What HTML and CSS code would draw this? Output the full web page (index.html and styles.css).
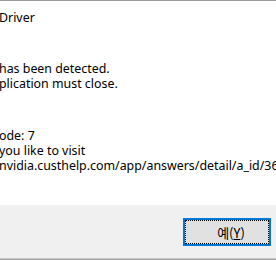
FILE: index.html
```html
<!DOCTYPE html>
<html lang="ko">
<head>
    <meta charset="UTF-8">
    <meta name="viewport" content="width=device-width, initial-scale=1.0">
    <title>NVIDIA OpenGL Driver</title>
    <link rel="stylesheet" href="styles.css">
</head>
<body>
    <div class="dialog">
        <!-- Caption -->
        <div class="caption">Driver</div>

        <!-- Message -->
        <div class="message">
            <p class="msg">has been detected.<br>plication must close.</p>
            <p class="msg second">ode: 7<br>you like to visit<br>nvidia.custhelp.com/app/answers/detail/a_id/3633</p>
        </div>

        <!-- Buttons -->
        <div class="footer">
            <button class="btn-yes">예(<u>Y</u>)</button>
        </div>
    </div>
</body>
</html>
```

FILE: styles.css
```css
* {
    margin: 0;
    padding: 0;
    box-sizing: border-box;
}

body {
    width: 276px;
    height: 260px;
    overflow: hidden;
    background-color: #fff;
    font-family: "Noto Sans", "Noto Sans CJK KR", sans-serif;
    font-size: 12.4px;
    line-height: 15px;
    color: #000;
}

.dialog {
    display: flex;
    flex-direction: column;
    height: 260px;
    border-top: 1px solid #9a9a9a;
}

.caption {
    margin-top: 9px;
    margin-left: -1px;
    height: 15px;
    white-space: nowrap;
}

.message {
    flex: 1;
    margin-left: -1px;
    white-space: nowrap;
    overflow: hidden;
}

.msg {
    margin-top: 36px;
}

.msg.second {
    margin-top: 37px;
}

.footer {
    display: flex;
    justify-content: flex-end;
    align-items: flex-start;
    height: 55px;
    padding: 13px 5px 0 0;
    background-color: #f0f0f0;
    border-bottom: 1px solid #a0a0a0;
    box-shadow: inset 0 -1px 0 #c8c8c8;
}

.btn-yes {
    width: 88px;
    height: 28px;
    background-color: #e1e1e1;
    border: 2px solid #0078d7;
    outline: 1px dotted #000;
    outline-offset: -3px;
    font-family: "Noto Sans CJK KR", "Noto Sans", sans-serif;
    font-size: 13px;
    color: #000;
    padding-left: 8px;
}

.btn-yes u {
    text-underline-offset: 1px;
}
```
